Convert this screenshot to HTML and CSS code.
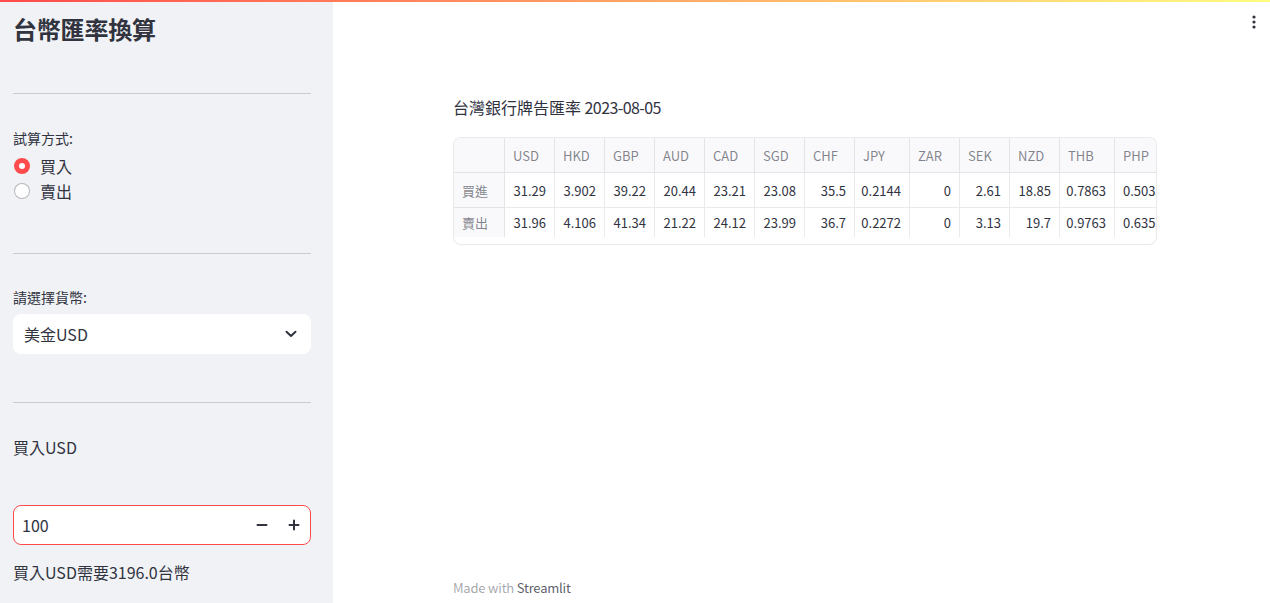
FILE: index.html
```html
<!DOCTYPE html>
<html lang="zh-Hant">
<head>
<meta charset="utf-8">
<title>台幣匯率換算</title>
<link rel="stylesheet" href="styles.css">
</head>
<body>
<div class="decoration"></div>
<div class="app">
  <aside class="sidebar">
    <h1 class="side-title">台幣匯率換算</h1>
    <hr class="divider first">
    <div class="label gap-label1">試算方式:</div>
    <div class="radio-group">
      <div class="radio-row"><span class="radio checked"></span><span>買入</span></div>
      <div class="radio-row"><span class="radio"></span><span>賣出</span></div>
    </div>
    <hr class="divider second">
    <div class="label gap-label2">請選擇貨幣:</div>
    <div class="select">
      <span>美金USD</span>
      <svg class="chev" width="12" height="8" viewBox="0 0 12 8"><path d="M1.5 1.8 L6 6 L10.5 1.8" fill="none" stroke="#31333f" stroke-width="2" stroke-linecap="round" stroke-linejoin="round"/></svg>
    </div>
    <hr class="divider third">
    <div class="text-line buy-label">買入USD</div>
    <div class="number-input">
      <span class="num-value">100</span>
      <span class="step">
        <svg width="12" height="12" viewBox="0 0 12 12"><path d="M1.5 6 H10.5" stroke="#31333f" stroke-width="2" stroke-linecap="round"/></svg>
      </span>
      <span class="step">
        <svg width="12" height="12" viewBox="0 0 12 12"><path d="M1.5 6 H10.5 M6 1.5 V10.5" stroke="#31333f" stroke-width="2" stroke-linecap="round"/></svg>
      </span>
    </div>
    <div class="text-line result">買入USD需要3196.0台幣</div>
  </aside>
  <main class="main">
    <div class="menu-btn">
      <svg width="6" height="14" viewBox="0 0 6 14"><circle cx="3" cy="2" r="1.6" fill="#31333f"/><circle cx="3" cy="7" r="1.6" fill="#31333f"/><circle cx="3" cy="12" r="1.6" fill="#31333f"/></svg>
    </div>
    <div class="block">
      <div class="caption">台灣銀行牌告匯率 <span class="date">2023-08-05</span></div>
      <div class="grid-box">
        <div class="grid">
          <div class="row head">
            <div class="cell idx"></div>
            <div class="cell w50">USD</div>
            <div class="cell w50">HKD</div>
            <div class="cell w50">GBP</div>
            <div class="cell w50">AUD</div>
            <div class="cell w50">CAD</div>
            <div class="cell w50">SGD</div>
            <div class="cell w50">CHF</div>
            <div class="cell w55">JPY</div>
            <div class="cell w50">ZAR</div>
            <div class="cell w50">SEK</div>
            <div class="cell w50">NZD</div>
            <div class="cell w55">THB</div>
            <div class="cell w55">PHP</div>
          </div>
          <div class="row body">
            <div class="cell idx">買進</div>
            <div class="cell w50 num">31.29</div>
            <div class="cell w50 num">3.902</div>
            <div class="cell w50 num">39.22</div>
            <div class="cell w50 num">20.44</div>
            <div class="cell w50 num">23.21</div>
            <div class="cell w50 num">23.08</div>
            <div class="cell w50 num">35.5</div>
            <div class="cell w55 num">0.2144</div>
            <div class="cell w50 num">0</div>
            <div class="cell w50 num">2.61</div>
            <div class="cell w50 num">18.85</div>
            <div class="cell w55 num">0.7863</div>
            <div class="cell w55 num">0.5033</div>
          </div>
          <div class="row body last">
            <div class="cell idx">賣出</div>
            <div class="cell w50 num">31.96</div>
            <div class="cell w50 num">4.106</div>
            <div class="cell w50 num">41.34</div>
            <div class="cell w50 num">21.22</div>
            <div class="cell w50 num">24.12</div>
            <div class="cell w50 num">23.99</div>
            <div class="cell w50 num">36.7</div>
            <div class="cell w55 num">0.2272</div>
            <div class="cell w50 num">0</div>
            <div class="cell w50 num">3.13</div>
            <div class="cell w50 num">19.7</div>
            <div class="cell w55 num">0.9763</div>
            <div class="cell w55 num">0.6353</div>
          </div>
        </div>
      </div>
    </div>
    <footer class="footer"><span class="made">Made with</span> <span class="brand">Streamlit</span></footer>
  </main>
</div>
</body>
</html>
```

FILE: styles.css
```css
* { box-sizing: border-box; }

html, body {
  margin: 0;
  padding: 0;
  height: 100%;
}

body {
  font-family: "Noto Sans CJK TC", "Noto Sans", sans-serif;
  color: #31333f;
  background: #ffffff;
  overflow: hidden;
}

.decoration {
  position: absolute;
  top: 0;
  left: 0;
  right: 0;
  height: 2px;
  background: linear-gradient(90deg, #ff4b4b, #fffd80);
  z-index: 10;
}

.app {
  display: flex;
  height: 603px;
}

/* Sidebar */
.sidebar {
  width: 333px;
  flex: none;
  background: #f0f2f6;
  padding: 0 22px 0 13px;
  display: flex;
  flex-direction: column;
}

.side-title {
  margin: 14px 0 0 0;
  font-size: 24px;
  line-height: 30px;
  font-weight: 700;
  letter-spacing: -0.2px;
  color: #31333f;
}

.divider {
  border: none;
  border-top: 1px solid rgba(49, 51, 63, 0.2);
  margin: 0;
  height: 0;
}
.divider.first { margin-top: 49px; }
.divider.second { margin-top: 50px; }
.divider.third { margin-top: 48px; }

.label {
  font-size: 14px;
  line-height: 20px;
  color: #31333f;
}
.gap-label1 { margin-top: 34px; }
.gap-label2 { margin-top: 33px; }

.radio-group {
  margin-top: 5px;
  display: flex;
  flex-direction: column;
}

.radio-row {
  display: flex;
  align-items: center;
  height: 25px;
  font-size: 16px;
  gap: 10px;
  padding-left: 1px;
}

.radio {
  width: 16px;
  height: 16px;
  border-radius: 50%;
  background: #ffffff;
  border: 1px solid rgba(49, 51, 63, 0.35);
  flex: none;
}
.radio.checked {
  background: #ffffff;
  border: 5px solid #ff4b4b;
}

.select {
  margin-top: 7px;
  height: 40px;
  background: #ffffff;
  border-radius: 8px;
  display: flex;
  align-items: center;
  justify-content: space-between;
  padding: 0 14px 0 11px;
  font-size: 16px;
}

.text-line {
  font-size: 16px;
  line-height: 24px;
}
.buy-label { margin-top: 32px; }
.result { margin-top: 15px; }

.number-input {
  margin-top: 46px;
  height: 40px;
  background: #ffffff;
  border: 1px solid #ff4b4b;
  border-radius: 8px;
  display: flex;
  align-items: center;
  padding-left: 8px;
  font-size: 16px;
}
.num-value { flex: 1; }
.step {
  width: 32px;
  height: 38px;
  display: flex;
  align-items: center;
  justify-content: center;
}

/* Main */
.main {
  flex: 1;
  position: relative;
  display: flex;
  flex-direction: column;
  padding-left: 120px;
}

.menu-btn {
  position: absolute;
  top: 15px;
  right: 13px;
  width: 6px;
  height: 14px;
  display: flex;
}

.block {
  width: 704px;
  margin-top: 95px;
}

.caption {
  font-size: 16px;
  line-height: 24px;
}
.date { letter-spacing: -0.6px; }

.grid-box {
  margin-top: 18px;
  width: 704px;
  height: 108px;
  border: 1px solid rgba(49, 51, 63, 0.1);
  border-radius: 8px;
  overflow: hidden;
  background: #ffffff;
}

.grid {
  display: flex;
  flex-direction: column;
}

.row {
  display: flex;
  height: 35px;
  flex: none;
}
.row.head {
  background: #f9f9fb;
  height: 35px;
}

.cell {
  flex: none;
  height: 100%;
  font-size: 13px;
  display: flex;
  align-items: center;
  padding: 0 8px;
  border-right: 1px solid rgba(49, 51, 63, 0.1);
  border-bottom: 1px solid rgba(49, 51, 63, 0.1);
  white-space: nowrap;
  overflow: hidden;
}
.row.last .cell { border-bottom: none; height: 29px; }

.head .cell { color: rgba(49, 51, 63, 0.6); }
.cell.idx {
  width: 51px;
  background: #f9f9fb;
  color: rgba(49, 51, 63, 0.6);
}
.cell.w50 { width: 50px; }
.cell.w55 { width: 55px; }
.cell.num { justify-content: flex-end; }
.row .cell:last-child { border-right: none; justify-content: flex-start; }

.footer {
  margin-top: auto;
  margin-bottom: 5px;
  font-size: 13px;
  line-height: 20px;
  letter-spacing: -0.2px;
}
.made { color: rgba(49, 51, 63, 0.45); }
.brand { color: rgba(49, 51, 63, 0.8); }
```
